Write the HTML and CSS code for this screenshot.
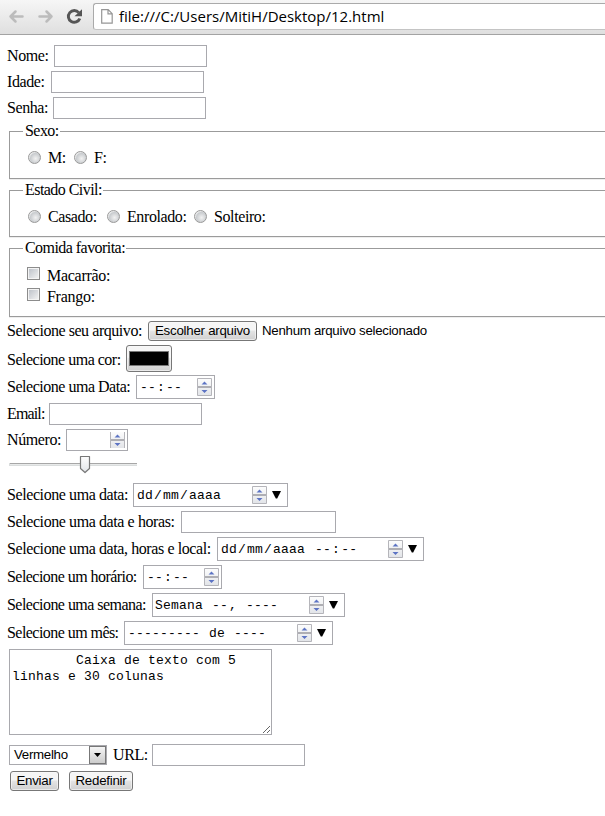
FILE: index.html
```html
<!DOCTYPE html>
<html lang="pt-BR">
<head>
<meta charset="utf-8">
<title>12.html</title>
<link rel="stylesheet" href="styles.css">
</head>
<body>
<svg class="defs" aria-hidden="true">
  <linearGradient id="face" x1="0" y1="0" x2="0" y2="1"><stop offset="0" stop-color="#fdfdfd"/><stop offset="1" stop-color="#e2e4e8"/></linearGradient>
  <symbol id="spin" viewBox="0 0 15 18">
    <path d="M.5.5h14v8H.5zM.5 9.500h14v8H.5z" fill="url(#face)" stroke="#b5b5ba"/>
    <path d="M0 9h15" stroke="#a8a8ad" />
    <path d="M4.500 6.500 7.500 3.500l3 3zM4.500 12l3 3 3-3z" fill="#5d74c4"/>
  </symbol>
  <symbol id="drop" viewBox="0 0 9 8"><path d="M0 0h9L5.200 7.500H3.800z"/></symbol>
</svg>
<header class="toolbar">
  <svg class="nav" width="92" height="34" viewBox="0 0 92 34" fill="none">
    <g stroke="#bcbcbc" stroke-width="2.500" stroke-linecap="round" stroke-linejoin="round">
      <path d="M22.500 16.500H10.500M15.500 11.500l-5 5 5 5"/>
      <path d="M39.500 16.500h12M46.500 11.500l5 5-5 5"/>
    </g>
    <path d="M78.800 12.600A5.900 5.900 0 1 0 79.800 18.500" stroke="#555" stroke-width="2.900"/>
    <path d="M82 9.200v7h-7.500z" fill="#555"/>
  </svg>
  <div class="address">
    <svg width="12" height="15" viewBox="0 0 12 15"><path d="M.7.700h6.500l4 4v9.500H.7zM7 .7v4.200h4.200" fill="#fff" stroke="#969696" stroke-width="1.200"/></svg>
    <span>file:///C:/Users/MitiH/Desktop/12.html</span>
  </div>
</header>
<form>
  <div class="row"><label class="l-nome">Nome:</label><input class="field" type="text"></div>
  <div class="row"><label class="l-idade">Idade:</label><input class="field" type="text"></div>
  <div class="row"><label class="l-senha">Senha:</label><input class="field" type="password"></div>
  <div class="groups">
    <fieldset class="sexo"><legend>Sexo:</legend>
      <div class="options"><i class="radio"></i><span class="o-m">M:</span><i class="radio"></i><span>F:</span></div>
    </fieldset>
    <fieldset class="civil"><legend>Estado Civil:</legend>
      <div class="options"><i class="radio"></i><span class="o-casado">Casado:</span><i class="radio"></i><span class="o-enrolado">Enrolado:</span><i class="radio"></i><span>Solteiro:</span></div>
    </fieldset>
    <fieldset class="comida"><legend>Comida favorita:</legend>
      <div class="options check"><i class="checkbox"></i><span>Macarrão:</span></div>
      <div class="options check"><i class="checkbox"></i><span>Frango:</span></div>
    </fieldset>
  </div>
  <div class="row file"><label class="l-arquivo">Selecione seu arquivo:</label><button type="button" class="btn b-file">Escolher arquivo</button><span class="status">Nenhum arquivo selecionado</span></div>
  <div class="row color"><label class="l-cor">Selecione uma cor:</label><button type="button" class="btn b-color"><i class="swatch"></i></button></div>
  <div class="row tall"><label class="l-data1">Selecione uma Data:</label><div class="picker p-time"><span><b>--</b>:<b>--</b></span><svg class="spin"><use href="#spin"/></svg></div></div>
  <div class="row"><label class="l-email">Email:</label><input class="field" type="text"></div>
  <div class="row"><label class="l-numero">Número:</label><div class="picker p-number"><svg class="spin" viewBox="0 1 15 16"><use href="#spin" width="15" height="18"/></svg></div></div>
  <div class="row tall slider"><svg width="128" height="20" viewBox="0 0 128 20"><path d="M0 8.500h128" stroke="#a7a7a7"/><path d="M0 9.500h128" stroke="#e8eaea"/><path d="M.5 8v3M0 10.500h128" stroke="#dadddd"/><path d="M71.500 1.500h9v12l-4.500 4-4.500-4z" fill="url(#face)" stroke="#777" stroke-width="1.200" stroke-linejoin="round"/></svg></div>
  <div class="row tall"><label class="l-data2">Selecione uma data:</label><div class="picker p-date"><span><b>dd</b>/<b>mm</b>/<b>aaaa</b></span><svg class="spin"><use href="#spin"/></svg><svg class="drop"><use href="#drop"/></svg></div></div>
  <div class="row"><label class="l-horas">Selecione uma data e horas:</label><input class="field wide" type="text"></div>
  <div class="row tall"><label class="l-local">Selecione uma data, horas e local:</label><div class="picker p-local"><span><b>dd</b>/<b>mm</b>/<b>aaaa</b> <b>--</b>:<b>--</b></span><svg class="spin"><use href="#spin"/></svg><svg class="drop"><use href="#drop"/></svg></div></div>
  <div class="row tall"><label class="l-horario">Selecione um horário:</label><div class="picker p-time"><span><b>--</b>:<b>--</b></span><svg class="spin"><use href="#spin"/></svg></div></div>
  <div class="row tall"><label class="l-semana">Selecione uma semana:</label><div class="picker p-week"><span>Semana <b>--</b>, <b>----</b></span><svg class="spin"><use href="#spin"/></svg><svg class="drop"><use href="#drop"/></svg></div></div>
  <div class="row tall"><label class="l-mes">Selecione um mês:</label><div class="picker p-month"><span><b>---------</b> de <b>----</b></span><svg class="spin"><use href="#spin"/></svg><svg class="drop"><use href="#drop"/></svg></div></div>
  <textarea>        Caixa de texto com 5 linhas e 30 colunas</textarea>
  <div class="row last"><div class="select"><span>Vermelho</span><i><svg width="7" height="4" viewBox="0 0 7 4"><path d="M0 0h7L3.500 4z"/></svg></i></div><label class="l-url">URL:</label><input class="field" type="text"></div>
  <div class="row actions"><button type="button" class="btn b-send">Enviar</button><button type="button" class="btn b-reset">Redefinir</button></div>
</form>
</body>
</html>
```
FILE: styles.css
```css
* { box-sizing: border-box; }
body { margin: 0; height: 816px; overflow: hidden; background: #fff; color: #000; font: 16px/20px "Liberation Serif", serif; }
.defs { position: absolute; width: 0; height: 0; }
.toolbar { display: flex; height: 35px; background: linear-gradient(#f6f6f6, #dfdfdf); border-bottom: 1px solid #a3a3a3; overflow: hidden; }
.nav { flex: none; }
.address { display: flex; align-items: center; flex: 1; height: 27px; margin: 3px 0 0 1px; padding-left: 7px; background: #fff; border: 1px solid #aaa; border-bottom-color: #c4c4c4; border-right: 0; border-radius: 3px 0 0 3px; font: 15px/24px "Open Sans", sans-serif; }
.address span { margin-left: 6px; margin-top: -2px; white-space: nowrap; }
form { display: flex; flex-direction: column; gap: 4px; padding: 10px 0 0 7px; }
.row { display: flex; align-items: center; height: 22px; white-space: nowrap; }
.row.tall { height: 24px; }
label { flex: none; letter-spacing: -.41px; }
.field { width: 153px; height: 22px; margin: 0; padding: 1px 2px; border: 1px solid #a9a9ae; outline: 0; background: #fff; font: 13px "Liberation Sans", sans-serif; }
.field.wide { width: 155px; }
.l-nome { width: 47px; } .l-idade { width: 44px; } .l-senha { width: 46px; }
.l-arquivo { width: 141px; letter-spacing: -.45px; } .l-cor { width: 119px; letter-spacing: -.5px; } .l-data1 { width: 129px; letter-spacing: -.48px; }
.l-email { width: 42px; letter-spacing: -.85px; } .l-numero { width: 59px; } .l-data2 { width: 126px; }
.l-horas { width: 174px; } .l-local { width: 210px; } .l-horario { width: 136px; letter-spacing: -.55px; }
.l-semana { width: 145px; letter-spacing: -.53px; } .l-mes { width: 117px; letter-spacing: -.55px; }
.tall label { margin-top: -1px; }
.groups { height: 196px; margin-top: -2px; margin-left: 2px; }
fieldset { margin: 0 0 1px; padding: 6px 0 0 18px; border: 1px solid #9b9b9b; border-right: 0; box-shadow: 0 1px 0 #eee; }
legend { height: 20px; margin-left: -5px; padding: 0 1px 0 2px; letter-spacing: -.55px; }
.sexo { height: 58px; } .civil { height: 57px; } .comida { height: 79px; padding-left: 17px; }
.comida legend { margin-left: -4px; }
.options { display: flex; align-items: center; height: 20px; letter-spacing: -.4px; }
.options span { padding-top: 2px; }
.check { height: 21px; letter-spacing: -.28px; }
.radio { width: 13px; height: 13px; margin-right: 7px; border: 1px solid #999; border-radius: 50%; background: radial-gradient(circle at 60% 60%, #f2f2f2, #c9cccf 55%, #f5f5f5 75%); }
.o-m { width: 26px; } .o-casado { width: 59px; } .o-enrolado { width: 67px; }
.checkbox { width: 13px; height: 13px; margin-right: 7px; margin-top: -2px; border: 1px solid #8c8c8c; background: linear-gradient(135deg, #b9bec6, #f6f6f6); box-shadow: inset 0 0 0 1px #f4f4f4; }
.btn { flex: none; height: 20px; margin: 0; padding: 0; border: 1px solid #777; border-radius: 3px; background: linear-gradient(#f5f5f5 0 45%, #e4e4e4 50%, #d0d0d0); box-shadow: inset 0 0 0 1px #fafafa99; color: #000; font: 13.3px/18px "Liberation Sans", sans-serif; letter-spacing: -.25px; white-space: nowrap; }
.row.file { height: 20px; }
.b-file { width: 109px; }
.status { margin-left: 5px; font: 13.3px/20px "Liberation Sans", sans-serif; letter-spacing: -.28px; }
.row.color { height: 27px; margin-bottom: -1px; }
.color label { margin-top: 2px; }
.b-color { display: flex; align-items: center; justify-content: center; width: 46px; height: 27px; }
.swatch { width: 40px; height: 15px; background: #000; border: 1px solid #777; }
.picker { display: flex; align-items: center; flex: none; height: 24px; padding: 0 2px 0 2px; border: 1px solid #a9a9ae; font: 13px/20px "Liberation Mono", monospace; letter-spacing: .2px; white-space: pre; }
.picker span { padding-top: 1px; }
.picker b { padding: 0 1px; font-weight: normal; }
.spin { flex: none; width: 15px; height: 18px; margin-left: auto; }
.drop { flex: none; width: 9px; height: 8px; margin: 0 4px 0 5px; }
.p-time { width: 79px; }
.p-number { width: 62px; height: 22px; }
.p-number .spin { height: 16px; }
.p-date { width: 155px; } .p-local { width: 207px; } .p-week { width: 193px; } .p-month { width: 209px; }
.slider { padding-left: 2px; }
.slider svg { margin-top: -4px; }
textarea { width: 263px; height: 86px; margin: 0 0 5px 2px; padding: 3px 2px 2px; border: 1px solid #a9a9ae; outline: 0; resize: both; overflow: hidden; background: #fff; color: #000; font: 13px/16px "Liberation Mono", monospace; letter-spacing: .2px; }
.select { display: flex; align-items: center; justify-content: space-between; flex: none; width: 98px; height: 20px; margin: 0 6px 0 2px; padding-left: 4px; border: 1px solid #a9a9ae; font: 13.3px/18px "Liberation Sans", sans-serif; letter-spacing: -.3px; }
.select i { display: flex; align-items: center; justify-content: center; width: 17px; height: 18px; border: 1px solid #777; background: linear-gradient(#f5f5f5, #ccc); }
.l-url { width: 39px; }
.row.actions { height: 20px; margin: 1px 0 0 3px; gap: 10px; }
.b-send { width: 49px; } .b-reset { width: 64px; }
```
